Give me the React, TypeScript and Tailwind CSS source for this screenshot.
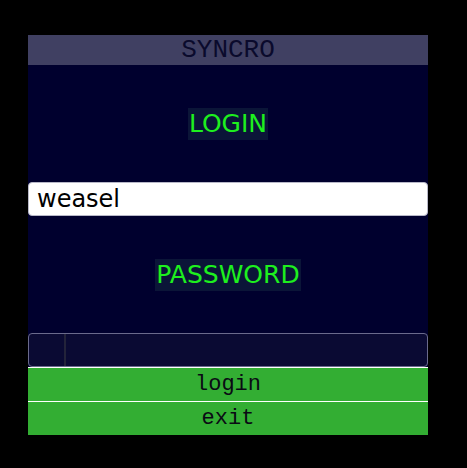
import { useState } from "react";

const mono = "font-['Liberation_Mono',monospace]";
const sans = "font-['DejaVu_Sans',sans-serif]";

function Label({ text }: { text: string }) {
  return (
    <div className="flex h-[117px] items-center justify-center">
      <span className={`${sans} bg-[#0b1538] px-[1px] py-[2px] text-[25px] leading-[28px] text-[#1ef01e]`}>
        {text}
      </span>
    </div>
  );
}

export default function App() {
  const [user, setUser] = useState("weasel");
  const [pass, setPass] = useState("");

  return (
    <div className="min-h-[468px] bg-black pl-[28px] pt-[35px]">
      <div className="flex w-[400px] flex-col">
        <div className={`${mono} flex h-[30px] items-center justify-center bg-[#404062] text-[26px] text-[#0a0a2c]`}>
          SYNCRO
        </div>
        <div className="flex flex-col bg-[#00002e]">
          <Label text="LOGIN" />
          <input
            value={user}
            onChange={(e) => setUser(e.target.value)}
            className={`${sans} h-[34px] w-full rounded-[4px] border border-[#b8b8c8] bg-white px-[8px] text-[24px] text-black outline-none`}
          />
          <Label text="PASSWORD" />
          <div className="flex h-[34px] w-full rounded-[4px] border border-[#6a6a8c] bg-[#0a0a33]">
            <div className="w-[37px] border-r-2 border-[#23233a]" />
            <input
              type="password"
              value={pass}
              onChange={(e) => setPass(e.target.value)}
              className="flex-1 bg-transparent text-white outline-none"
            />
          </div>
        </div>
        <button className={`${mono} h-[34px] border-t border-white bg-[#33ae33] text-[22px] text-[#0a0a14]`}>
          login
        </button>
        <button className={`${mono} h-[34px] border-t border-white bg-[#33ae33] text-[22px] text-[#0a0a14]`}>
          exit
        </button>
      </div>
    </div>
  );
}
